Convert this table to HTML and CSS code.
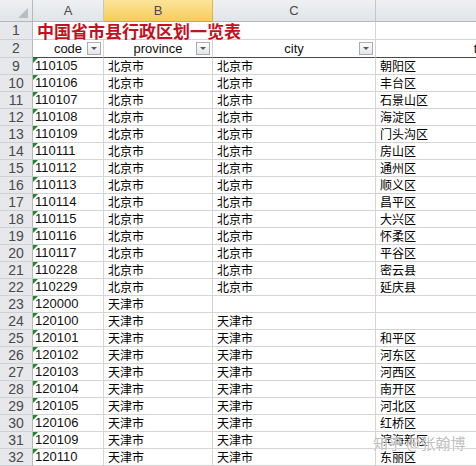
FILE: index.html
```html
<!DOCTYPE html>
<html lang="zh">
<head>
<meta charset="utf-8">
<title>中国省市县行政区划一览表</title>
<link rel="stylesheet" href="styles.css">
</head>
<body>
<div class="sheet">
  <div class="corner"><svg width="10" height="10" viewBox="0 0 10 10"><polygon points="10,0 10,10 0,10" fill="#b9bcc2"/></svg></div>
  <div class="ch">A</div>
  <div class="ch sel">B</div>
  <div class="ch">C</div>
  <div class="ch"></div>

  <div class="rh">1</div>
  <div class="title">中国省市县行政区划一览表</div>
  <div class="c"></div>

  <div class="rh">2</div>
  <div class="hd">code<span class="fb"></span></div>
  <div class="hd">province<span class="fb"></span></div>
  <div class="hd">city<span class="fb"></span></div>
  <div class="hd hd-d">town</div>

  <div class="rh">9</div><div class="c n">110105</div><div class="c zh">北京市</div><div class="c zh">北京市</div><div class="c zh">朝阳区</div>
  <div class="rh">10</div><div class="c n">110106</div><div class="c zh">北京市</div><div class="c zh">北京市</div><div class="c zh">丰台区</div>
  <div class="rh">11</div><div class="c n">110107</div><div class="c zh">北京市</div><div class="c zh">北京市</div><div class="c zh">石景山区</div>
  <div class="rh">12</div><div class="c n">110108</div><div class="c zh">北京市</div><div class="c zh">北京市</div><div class="c zh">海淀区</div>
  <div class="rh">13</div><div class="c n">110109</div><div class="c zh">北京市</div><div class="c zh">北京市</div><div class="c zh">门头沟区</div>
  <div class="rh">14</div><div class="c n">110111</div><div class="c zh">北京市</div><div class="c zh">北京市</div><div class="c zh">房山区</div>
  <div class="rh">15</div><div class="c n">110112</div><div class="c zh">北京市</div><div class="c zh">北京市</div><div class="c zh">通州区</div>
  <div class="rh">16</div><div class="c n">110113</div><div class="c zh">北京市</div><div class="c zh">北京市</div><div class="c zh">顺义区</div>
  <div class="rh">17</div><div class="c n">110114</div><div class="c zh">北京市</div><div class="c zh">北京市</div><div class="c zh">昌平区</div>
  <div class="rh">18</div><div class="c n">110115</div><div class="c zh">北京市</div><div class="c zh">北京市</div><div class="c zh">大兴区</div>
  <div class="rh">19</div><div class="c n">110116</div><div class="c zh">北京市</div><div class="c zh">北京市</div><div class="c zh">怀柔区</div>
  <div class="rh">20</div><div class="c n">110117</div><div class="c zh">北京市</div><div class="c zh">北京市</div><div class="c zh">平谷区</div>
  <div class="rh">21</div><div class="c n">110228</div><div class="c zh">北京市</div><div class="c zh">北京市</div><div class="c zh">密云县</div>
  <div class="rh">22</div><div class="c n">110229</div><div class="c zh">北京市</div><div class="c zh">北京市</div><div class="c zh">延庆县</div>
  <div class="rh">23</div><div class="c n">120000</div><div class="c zh">天津市</div><div class="c zh"></div><div class="c zh"></div>
  <div class="rh">24</div><div class="c n">120100</div><div class="c zh">天津市</div><div class="c zh">天津市</div><div class="c zh"></div>
  <div class="rh">25</div><div class="c n">120101</div><div class="c zh">天津市</div><div class="c zh">天津市</div><div class="c zh">和平区</div>
  <div class="rh">26</div><div class="c n">120102</div><div class="c zh">天津市</div><div class="c zh">天津市</div><div class="c zh">河东区</div>
  <div class="rh">27</div><div class="c n">120103</div><div class="c zh">天津市</div><div class="c zh">天津市</div><div class="c zh">河西区</div>
  <div class="rh">28</div><div class="c n">120104</div><div class="c zh">天津市</div><div class="c zh">天津市</div><div class="c zh">南开区</div>
  <div class="rh">29</div><div class="c n">120105</div><div class="c zh">天津市</div><div class="c zh">天津市</div><div class="c zh">河北区</div>
  <div class="rh">30</div><div class="c n">120106</div><div class="c zh">天津市</div><div class="c zh">天津市</div><div class="c zh">红桥区</div>
  <div class="rh">31</div><div class="c n">120109</div><div class="c zh">天津市</div><div class="c zh">天津市</div><div class="c zh">滨海新区</div>
  <div class="rh">32</div><div class="c n">120110</div><div class="c zh">天津市</div><div class="c zh">天津市</div><div class="c zh">东丽区</div>

  <div class="watermark">知乎 @张翰博</div>
</div>
</body>
</html>
```
FILE: styles.css
```css
html, body {
  margin: 0;
  padding: 0;
  background: #ffffff;
  overflow: hidden;
}

.sheet {
  position: relative;
  display: grid;
  grid-template-columns: 33px 71px 109px 163px 240px;
  grid-template-rows: 22px 18px 18px repeat(24, 17px);
  width: 616px;
  font-family: "Liberation Sans", "Noto Sans CJK SC", sans-serif;
  font-size: 13px;
  color: #000;
}

.sheet > div {
  box-sizing: border-box;
  white-space: nowrap;
  overflow: hidden;
}

.corner {
  background: linear-gradient(#eef0f3, #e1e4e8);
  border-right: 1px solid #b5b8bd;
  border-bottom: 1px solid #b5b8bd;
  display: flex;
  align-items: flex-end;
  justify-content: flex-end;
  padding: 0 4px 3px 0;
}

.ch {
  background: linear-gradient(#eef0f3, #e1e4e8);
  border-right: 1px solid #c3c6cc;
  border-bottom: 1px solid #b5b8bd;
  color: #4a4a4a;
  text-align: center;
  line-height: 21px;
  font-size: 13px;
}

.ch.sel {
  background: linear-gradient(#fbe49a, #f6cd5a);
  border-right-color: #e2b44a;
  border-bottom-color: #d9a63a;
}

.rh {
  background: #e6e8ec;
  border-right: 1px solid #b5b8bd;
  border-bottom: 1px solid #cdd0d4;
  color: #4a4a4a;
  text-align: center;
  font-size: 14px;
  line-height: 17px;
}

.sheet > .title {
  grid-column: span 3;
  overflow: visible;
  border-bottom: 1px solid #d4d4d4;
  border-right: 1px solid #d4d4d4;
  color: #c41020;
  font-weight: bold;
  font-size: 17px;
  line-height: 17px;
  padding-left: 4px;
  font-family: "Noto Sans CJK SC", sans-serif;
}

.c {
  border-right: 1px solid #d4d4d4;
  border-bottom: 1px solid #d4d4d4;
  line-height: 16px;
  padding-left: 3px;
}

.zh {
  font-size: 12px;
  padding-left: 4px;
  font-family: "Noto Sans CJK SC", sans-serif;
}

.n {
  position: relative;
  padding-left: 2px;
  color: #111;
}

.n::before {
  content: "";
  position: absolute;
  left: 0;
  top: 0;
  border-top: 5px solid #1d8a2a;
  border-right: 5px solid transparent;
}

.hd {
  position: relative;
  border-right: 1px solid #d4d4d4;
  border-bottom: 1px solid #4a4a4a;
  text-align: center;
  line-height: 17px;
  color: #111;
}

.hd-d {
  padding-right: 16px;
}

.fb {
  position: absolute;
  right: 2px;
  top: 2px;
  width: 14px;
  height: 13px;
  box-sizing: border-box;
  border: 1px solid #a9acb1;
  background: linear-gradient(#ffffff, #e3e5e8);
}

.fb::after {
  content: "";
  position: absolute;
  left: 3px;
  top: 4px;
  border-left: 3px solid transparent;
  border-right: 3px solid transparent;
  border-top: 3px solid #5a5a5a;
}

.watermark {
  position: absolute;
  left: 373px;
  top: 434px;
  font-family: "Noto Sans CJK SC", sans-serif;
  font-size: 15px;
  line-height: 18px;
  color: rgba(170, 170, 170, 0.75);
  text-shadow: 0 0 2px #ffffff, 0 0 1px #ffffff;
}
```
